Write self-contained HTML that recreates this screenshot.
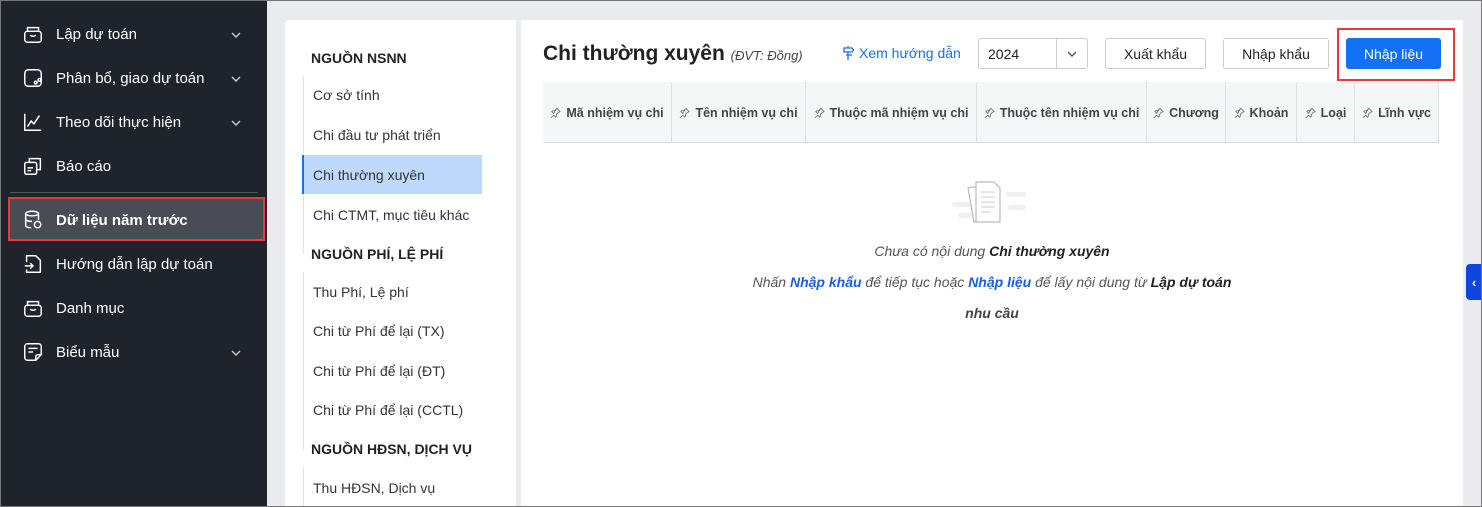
<!DOCTYPE html>
<html><head><meta charset="utf-8"><style>
*{margin:0;padding:0;box-sizing:border-box}
body{width:1482px;height:507px;overflow:hidden;font-family:"Liberation Sans",sans-serif;background:#e9ebef;position:relative;font-size:14px}
.frame{position:absolute;inset:0;border:1px solid #777;pointer-events:none;z-index:10}
.side{position:absolute;left:0;top:0;width:267px;height:507px;background:#1f232c;color:#fff}
.it{position:absolute;left:22px;height:24px;display:flex;align-items:center;font-size:15px}
.it svg{width:22px;height:22px;margin-right:12px}
.chev{position:absolute;left:230px;width:12px;height:12px}
.sel{position:absolute;left:8px;top:197px;width:257px;height:44px;background:#4a4c55;border:2px solid #e8393e}
.sep{position:absolute;left:10px;top:192px;width:248px;height:1px;background:#555}
.nav{position:absolute;left:285px;top:20px;width:231px;height:487px;background:#fff;border-radius:4px 0 0 0}
.main{position:absolute;left:521px;top:20px;width:942px;height:487px;background:#fff}
.h{position:absolute;left:26px;font-weight:bold;font-size:14px;color:#222}
.n{position:absolute;left:28px;font-size:14px;color:#333}
.vl{position:absolute;left:18px;width:1px;background:#e3e3e3}
.btn{position:absolute;top:38px;height:31px;border:1px solid #ccc;border-radius:3px;background:#fff;font-size:14px;color:#222;display:flex;align-items:center;justify-content:center}
.th{position:absolute;top:82px;height:61px;background:#f5f6f8;border-bottom:1px solid #ddd}
.c{position:absolute;top:0;height:61px;border-right:1px solid #e0e0e0;display:flex;align-items:center;justify-content:center;font-size:12.5px;font-weight:bold;color:#444;white-space:nowrap}
.c svg{margin-right:5px;flex:none}
.msg{position:absolute;left:521px;width:942px;text-align:center;font-style:italic;color:#555;font-size:14px}
.msg b{color:#222}.msg a{color:#1a5ee6;font-weight:bold}
</style></head><body>
<svg width="0" height="0" style="position:absolute"><defs><symbol id="pin" viewBox="0 0 12 12"><path d="M7 1l4 4-2 1-2 2 0 2-1 1-2-2-3 3M4 7L2 5l1-1 2 0 2-2z" fill="none" stroke="#777" stroke-width="1"/></symbol></defs></svg>
<div class="side">
<div class="sep"></div><div class="sel"></div>
<div class="it" style="top:22px"><svg viewBox="0 0 24 24" fill="none" stroke="#fff" stroke-width="1.6"><rect x="3" y="9" width="18" height="12" rx="3"/><path d="M6 9V5h12v4M9 13c1 2 5 2 6 0"/></svg>Lập dự toán</div>
<div class="it" style="top:66px"><svg viewBox="0 0 24 24" fill="none" stroke="#fff" stroke-width="1.6"><rect x="3" y="3" width="18" height="18" rx="4"/><circle cx="15" cy="17" r="1.5"/><circle cx="19" cy="14" r="1.5"/></svg>Phân bổ, giao dự toán</div>
<div class="it" style="top:110px"><svg viewBox="0 0 24 24" fill="none" stroke="#fff" stroke-width="1.6"><path d="M3 3v18h18M6 17l4-6 3 3 6-9"/></svg>Theo dõi thực hiện</div>
<div class="it" style="top:154px"><svg viewBox="0 0 24 24" fill="none" stroke="#fff" stroke-width="1.6"><rect x="3" y="8" width="13" height="13" rx="2"/><path d="M8 8V4h12v12h-4M6 14h6M6 17h4"/></svg>Báo cáo</div>
<div class="it" style="top:208px;font-weight:bold"><svg viewBox="0 0 24 24" fill="none" stroke="#fff" stroke-width="1.6"><ellipse cx="11" cy="5" rx="7" ry="2.5"/><path d="M4 5v13c0 1.5 3 2.5 6 2.5M18 5v7M4 11c0 1.5 3 2.5 7 2.5"/><circle cx="17" cy="17" r="3.5"/></svg>Dữ liệu năm trước</div>
<div class="it" style="top:252px"><svg viewBox="0 0 24 24" fill="none" stroke="#fff" stroke-width="1.6"><path d="M5 10V3h10l5 5v13H5v-3M3 14h9M9 11l3 3-3 3"/></svg>Hướng dẫn lập dự toán</div>
<div class="it" style="top:296px"><svg viewBox="0 0 24 24" fill="none" stroke="#fff" stroke-width="1.6"><rect x="3" y="9" width="18" height="12" rx="3"/><path d="M6 9V5h12v4M9 13c1 2 5 2 6 0"/></svg>Danh mục</div>
<div class="it" style="top:340px"><svg viewBox="0 0 24 24" fill="none" stroke="#fff" stroke-width="1.6"><path d="M21 15V6a3 3 0 00-3-3H6a3 3 0 00-3 3v12a3 3 0 003 3h9zM15 21v-4a2 2 0 012-2h4M7 8h10M7 12h5"/></svg>Biểu mẫu</div>
<svg class="chev" style="top:29px" viewBox="0 0 12 12" fill="none" stroke="#ccc" stroke-width="1.4"><path d="M2 4l4 4 4-4"/></svg>
<svg class="chev" style="top:73px" viewBox="0 0 12 12" fill="none" stroke="#ccc" stroke-width="1.4"><path d="M2 4l4 4 4-4"/></svg>
<svg class="chev" style="top:117px" viewBox="0 0 12 12" fill="none" stroke="#ccc" stroke-width="1.4"><path d="M2 4l4 4 4-4"/></svg>
<svg class="chev" style="top:347px" viewBox="0 0 12 12" fill="none" stroke="#ccc" stroke-width="1.4"><path d="M2 4l4 4 4-4"/></svg>
</div>
<div class="nav">
<div class="h" style="top:30px">NGUỒN NSNN</div>
<div class="vl" style="top:56px;height:178px"></div>
<div class="n" style="top:67px">Cơ sở tính</div>
<div class="n" style="top:107px">Chi đầu tư phát triển</div>
<div style="position:absolute;left:17px;top:135px;width:180px;height:39px;background:#bed9fb;border-left:2px solid #1a6ee6"></div>
<div class="n" style="top:147px">Chi thường xuyên</div>
<div class="n" style="top:187px">Chi CTMT, mục tiêu khác</div>
<div class="h" style="top:226px">NGUỒN PHÍ, LỆ PHÍ</div>
<div class="vl" style="top:252px;height:178px"></div>
<div class="n" style="top:264px">Thu Phí, Lệ phí</div>
<div class="n" style="top:303px">Chi từ Phí để lại (TX)</div>
<div class="n" style="top:343px">Chi từ Phí để lại (ĐT)</div>
<div class="n" style="top:382px">Chi từ Phí để lại (CCTL)</div>
<div class="h" style="top:421px">NGUỒN HĐSN, DỊCH VỤ</div>
<div class="vl" style="top:447px;height:40px"></div>
<div class="n" style="top:460px">Thu HĐSN, Dịch vụ</div>
</div>
<div class="main"></div>
<div style="position:absolute;left:543px;top:42px;font-size:21px;font-weight:bold;color:#222">Chi thường xuyên <span style="font-size:13px;font-weight:normal;font-style:italic;color:#444">(ĐVT: Đồng)</span></div>
<div style="position:absolute;left:842px;top:45px;font-size:14px;color:#1a6ee6;display:flex;align-items:center"><svg width="12" height="14" viewBox="0 0 12 14" fill="none" stroke="#1a6ee6" stroke-width="1.3" style="margin-right:5px"><path d="M2 2h8l1.5 2L10 6H2zM6 0v2M6 6v8M4 9h6"/></svg>Xem hướng dẫn</div>
<div class="btn" style="left:978px;width:110px;justify-content:flex-start;padding-left:9px">2024<span style="position:absolute;left:77px;top:0;width:1px;height:29px;background:#ccc"></span><svg style="position:absolute;left:87px;top:9px" width="12" height="12" viewBox="0 0 12 12" fill="none" stroke="#555" stroke-width="1.4"><path d="M2 4l4 4 4-4"/></svg></div>
<div class="btn" style="left:1105px;width:101px">Xuất khẩu</div>
<div class="btn" style="left:1223px;width:106px">Nhập khẩu</div>
<div style="position:absolute;left:1337px;top:28px;width:118px;height:53px;border:2px solid #e8393e"></div>
<div class="btn" style="left:1346px;width:95px;background:#1471f5;border-color:#1471f5;color:#fff">Nhập liệu</div>
<div class="th" style="left:543px;width:896px">
<div class="c" style="left:0;width:129px"><svg width="11" height="11"><use href="#pin"/></svg>Mã nhiệm vụ chi</div>
<div class="c" style="left:129px;width:134px"><svg width="11" height="11"><use href="#pin"/></svg>Tên nhiệm vụ chi</div>
<div class="c" style="left:263px;width:171px"><svg width="11" height="11"><use href="#pin"/></svg>Thuộc mã nhiệm vụ chi</div>
<div class="c" style="left:434px;width:170px"><svg width="11" height="11"><use href="#pin"/></svg>Thuộc tên nhiệm vụ chi</div>
<div class="c" style="left:604px;width:79px"><svg width="11" height="11"><use href="#pin"/></svg>Chương</div>
<div class="c" style="left:683px;width:71px"><svg width="11" height="11"><use href="#pin"/></svg>Khoản</div>
<div class="c" style="left:754px;width:58px"><svg width="11" height="11"><use href="#pin"/></svg>Loại</div>
<div class="c" style="left:812px;width:84px"><svg width="11" height="11"><use href="#pin"/></svg>Lĩnh vực</div>
</div>
<svg style="position:absolute;left:948px;top:180px" width="86" height="48" viewBox="0 0 86 48"><g fill="#eef0f3"><rect x="4" y="22" width="30" height="5" rx="2.5"/><rect x="10" y="33" width="20" height="5" rx="2.5"/><rect x="58" y="12" width="20" height="5" rx="2.5"/><rect x="60" y="25" width="18" height="5" rx="2.5"/></g><g fill="#fff" stroke="#bbb" stroke-width="1.2"><path d="M20 8l18-3 6 34-18 3z"/><path d="M28 2h18l6 6v34H28z"/></g><path d="M33 12h14M33 17h14M33 22h14M33 27h14M33 32h10" stroke="#ccc"/></svg>
<div class="msg" style="top:243px">Chưa có nội dung <b>Chi thường xuyên</b></div>
<div class="msg" style="top:274px">Nhấn <a>Nhập khẩu</a> để tiếp tục hoặc <a>Nhập liệu</a> để lấy nội dung từ <b>Lập dự toán</b></div>
<div class="msg" style="top:305px"><b style="color:#444">nhu cầu</b></div>
<div style="position:absolute;left:1466px;top:264px;width:16px;height:36px;background:#0d47d9;border-radius:4px 0 0 4px;color:#fff;font-weight:bold;font-size:13px;display:flex;align-items:center;justify-content:center">‹</div>
<div class="frame"></div>
</body></html>
